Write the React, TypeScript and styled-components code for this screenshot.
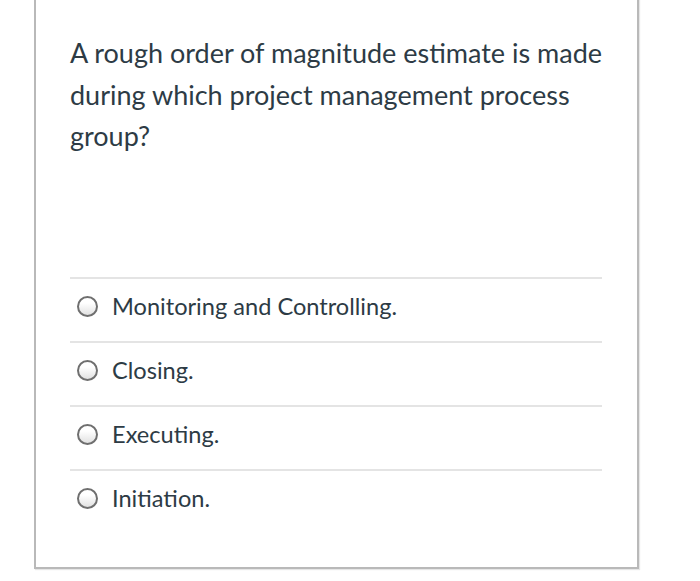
import React from "react";
import styled, { createGlobalStyle } from "styled-components";

const Global = createGlobalStyle`
  html, body { margin: 0; padding: 0; background: #ffffff; }
  body { font-family: Lato, "Noto Sans", sans-serif; color: #2d3b45; }
`;

const Page = styled.div`
  width: 700px;
  height: 581px;
  overflow: hidden;
  background: #fff;
`;

const Card = styled.div`
  margin: -2px 0 0 34px;
  width: 605px;
  height: 571px;
  border: 2px solid #b9b9b9;
  box-shadow: 1px 1px 1px #e6e6e6;
  background: #fff;
  padding: 32px 35px 0 34px;
  box-sizing: border-box;
`;

const Question = styled.p`
  margin: 0;
  font-size: 27px;
  line-height: 41.5px;
  width: 533px;
`;

const Answers = styled.div`
  margin-top: 120px;
  display: flex;
  flex-direction: column;
`;

const Answer = styled.label`
  display: flex;
  align-items: center;
  gap: 14px;
  height: 64px;
  border-top: 2px solid #e4e4e4;
  box-sizing: border-box;
  padding-left: 7px;
  font-size: 23.6px;
  padding-bottom: 7px;
`;

const Radio = styled.span`
  width: 21px;
  height: 21px;
  border-radius: 50%;
  border: 2px solid #6f6f6f;
  background: linear-gradient(#ffffff 30%, #e1e1e1);
  box-sizing: border-box;
  flex: none;
`;

const options = [
  "Monitoring and Controlling.",
  "Closing.",
  "Executing.",
  "Initiation.",
];

export default function App() {
  return (
    <Page>
      <Global />
      <Card>
        <Question>
          A rough order of magnitude estimate is made during which project
          management process group?
        </Question>
        <Answers>
          {options.map((o) => (
            <Answer key={o}>
              <Radio />
              {o}
            </Answer>
          ))}
        </Answers>
      </Card>
    </Page>
  );
}
